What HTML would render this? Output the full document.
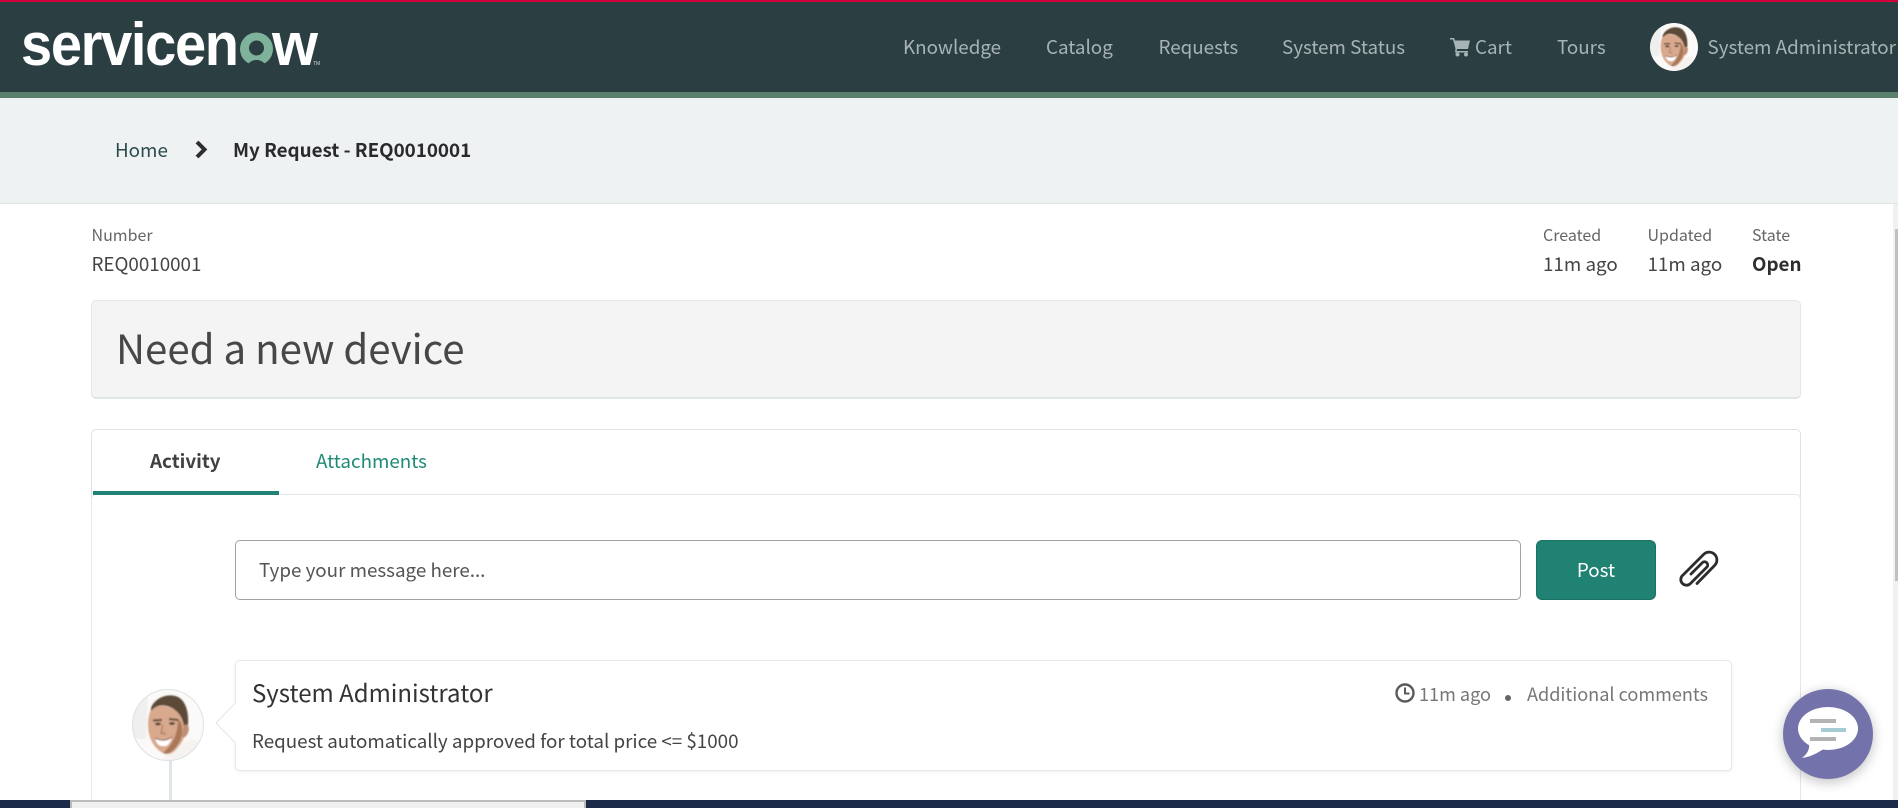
<!DOCTYPE html>
<html lang="en"><head><meta charset="utf-8"><title>My Request</title>
<style>
html,body{margin:0;padding:0;width:1898px;height:808px;overflow:hidden;background:#fff}
body{position:relative;font-family:"Noto Sans CJK JP","Liberation Sans",sans-serif;font-size:18.8px}
.b{position:absolute;box-sizing:border-box}
.t{position:absolute;white-space:nowrap;line-height:30px;height:30px}
.nav{color:#a7b4b5;font-size:18.8px;top:32px}
svg{position:absolute;overflow:visible}
</style></head><body>
<!-- header -->
<div class="b" style="left:0;top:0;width:1898px;height:92px;background:#2b3e42"></div>
<div class="b" style="left:0;top:0;width:1898px;height:2px;background:#d3003d"></div>
<div class="b" style="left:0;top:92px;width:1898px;height:6px;background:#5a7f6c"></div>
<div class="b" style="left:0;top:98px;width:1898px;height:106px;background:#eef2f3;border-bottom:1px solid #dfe4e5"></div>
<!-- logo -->
<svg style="left:0;top:0" width="340" height="90">
<text transform="translate(21,65) scale(1,1.07)" font-family="Liberation Sans" font-weight="700" font-size="56" fill="#fff" textLength="218" lengthAdjust="spacing">servicen</text>
<circle cx="256.500" cy="49" r="16.500" fill="#7fb29b"/><circle cx="256.500" cy="48" r="7.500" fill="#2b3e42"/>
<path d="M246 66.500C250 61 253 60 256.500 60S263 61 267 66.500Z" fill="#2b3e42"/>
<text transform="translate(272,65) scale(1,1.07)" font-family="Liberation Sans" font-weight="700" font-size="56" fill="#fff" textLength="46" lengthAdjust="spacingAndGlyphs">w</text>
<text x="313" y="65" font-family="Liberation Sans" font-size="5" fill="#cfd8d8">TM</text>
</svg>
<!-- nav -->
<span class="t nav" style="left:903px">Knowledge</span>
<span class="t nav" style="left:1046px">Catalog</span>
<span class="t nav" style="left:1158.500px">Requests</span>
<span class="t nav" style="left:1282px">System Status</span>
<svg style="left:1450px;top:37px" width="21" height="20" viewBox="0 0 21 20"><path d="M0 1H4L5 3.500H20L18 12H7L6.700 14H18V15.500H5L5.500 11.500L3 2.500H0Z" fill="#a7b4b5"/><circle cx="7.500" cy="17.500" r="2" fill="#a7b4b5"/><circle cx="16" cy="17.500" r="2" fill="#a7b4b5"/></svg>
<span class="t nav" style="left:1475px">Cart</span>
<span class="t nav" style="left:1557px">Tours</span>
<svg width="0" height="0" style="left:0;top:0"><defs>
<filter id="bl" x="-20%" y="-20%" width="140%" height="140%"><feGaussianBlur stdDeviation="0.900"/></filter>
<clipPath id="cp"><circle cx="36" cy="36" r="35.500"/></clipPath>
<g id="face"><g clip-path="url(#cp)"><rect width="72" height="72" fill="#fbfaf9"/>
<g filter="url(#bl)"><path d="M0 8H16L14 50H0Z" fill="#efefed"/>
<path d="M38 60L60 50L72 56V72H30Z" fill="#f5f2ef"/>
<path d="M19 20C28 13 46 18 52 30C56 36 54 50 46 58C42 64 36 67 31 64C23 60 16 50 16 36C16 30 17 25 19 20Z" fill="#d8a98d"/>
<path d="M46 30C52 34 52 50 44 58C40 63 36 66 31 64C38 58 46 48 46 30Z" fill="#a97858"/>
<path d="M19 19C22 10 35 3 46 8C54 12 57 24 56 36L52 40C52 30 47 22 38 18C30 15 24 16 19 22Z" fill="#5d4a38"/>
<path d="M52 36C56 34 58 38 56 44C54 48 51 50 50 47Z" fill="#bd8e72"/>
<path d="M21 31.500L30 31M37 30L46 31" stroke="#5f4836" stroke-width="2" fill="none"/>
<ellipse cx="26" cy="35" rx="3" ry="1.400" fill="#4f3d2f"/><ellipse cx="40" cy="34.500" rx="3" ry="1.400" fill="#4f3d2f"/>
<path d="M31 36L29 44L34 45" stroke="#a97858" stroke-width="1.200" fill="none"/>
<path d="M23 49C28 52 35 52 40 48C38 56 34 58 30 57C26 57 24 53 23 49Z" fill="#fff"/>
<path d="M23 49C28 52 35 52 40 48" stroke="#7d4a38" stroke-width="1" fill="none"/></g></g></g>
</defs></svg>
<svg style="left:1650px;top:23px" width="48" height="48" viewBox="0 0 72 72"><circle cx="36" cy="36" r="36" fill="#fff"/><use href="#face"/></svg>
<span class="t nav" style="left:1707.500px">System Administrator</span>
<!-- breadcrumb -->
<span class="t" style="left:115px;top:135px;color:#2c4b4d">Home</span>
<svg style="left:194px;top:140px" width="14" height="19"><path d="M3 2L10.500 9.500L3 17" fill="none" stroke="#2d2d33" stroke-width="4"/></svg>
<span class="t" style="left:233px;top:135px;color:#2a2a2e;font-weight:700">My Request - REQ0010001</span>
<!-- meta -->
<span class="t" style="left:91.500px;top:219px;font-size:16px;color:#666">Number</span>
<span class="t" style="left:91.500px;top:249px;color:#444">REQ0010001</span>
<span class="t" style="left:1543px;top:219px;font-size:16px;color:#666">Created</span>
<span class="t" style="left:1543px;top:249px;color:#444">11m ago</span>
<span class="t" style="left:1647.500px;top:219px;font-size:16px;color:#666">Updated</span>
<span class="t" style="left:1647.500px;top:249px;color:#444">11m ago</span>
<span class="t" style="left:1752px;top:219px;font-size:16px;color:#666">State</span>
<span class="t" style="left:1752px;top:249px;color:#2e2e2e;font-weight:700">Open</span>
<!-- title -->
<div class="b" style="left:91px;top:300px;width:1710px;height:99px;background:#f4f4f4;border:1px solid #e2e8ea;border-bottom:2px solid #e0e5e8;border-radius:5px"></div>
<span class="t" style="left:116px;top:326px;font-size:40.200px;line-height:42px;height:42px;color:#474747">Need a new device</span>
<!-- tabs + panel -->
<div class="b" style="left:91px;top:429px;width:1710px;height:70px;border:1px solid #dde3e5;border-bottom:0;border-radius:5px 5px 0 0"></div>
<div class="b" style="left:91px;top:494px;width:1710px;height:320px;background:#fff;border:1px solid #e1e7ea;border-radius:5px"></div>
<div class="b" style="left:93px;top:491px;width:186px;height:4px;background:#1f8272"></div>
<span class="t" style="left:150px;top:446px;color:#404040;font-weight:700">Activity</span>
<span class="t" style="left:316px;top:446px;color:#1f8a76">Attachments</span>
<!-- input -->
<div class="b" style="left:235px;top:540px;width:1286px;height:60px;border:1px solid #a1a1a1;border-radius:5px;background:#fff"></div>
<span class="t" style="left:259px;top:555px;color:#555">Type your message here...</span>
<div class="b" style="left:1536px;top:540px;width:120px;height:60px;background:#1f8272;border:1px solid #1a7263;border-radius:6px"></div>
<span class="t" style="left:1576px;top:555px;color:#fff;width:40px;text-align:center">Post</span>
<svg style="left:1679px;top:552px" width="38" height="34" viewBox="0 0 38 34"><path d="M18 31.500L36 13A7.800 7.800 0 0 0 25 2L3 24A5.700 5.700 0 0 0 11 32L28 15A3.200 3.200 0 0 0 23.500 10.500L12 22" fill="none" stroke="#2c2c2c" stroke-width="2.800" stroke-linecap="round"/></svg>
<!-- timeline avatar -->
<div class="b" style="left:169px;top:760px;width:3px;height:40px;background:#dfe6e9"></div>
<svg style="left:132px;top:689px" width="72" height="72" viewBox="0 0 72 72"><use href="#face"/><circle cx="36" cy="36" r="35.500" fill="none" stroke="#dbe3e5" stroke-width="1"/></svg>
<!-- card -->
<div class="b" style="left:235px;top:660px;width:1497px;height:111px;background:#fff;border:1px solid #e3e9ec;border-radius:5px;box-shadow:0 1px 3px rgba(0,0,0,.07)"></div>
<svg style="left:214px;top:700px" width="24" height="46"><path d="M21.500 3L2 23L21.500 43" fill="#fff" stroke="#e1e7ea" stroke-width="1"/><rect x="21.500" y="3" width="2" height="40" fill="#fff"/></svg>
<span class="t" style="left:252px;top:677px;font-size:24px;color:#333">System Administrator</span>
<span class="t" style="left:252px;top:726px;font-size:18.800px;color:#444">Request automatically approved for total price &lt;= $1000</span>
<svg style="left:1395px;top:683px" width="20" height="20"><circle cx="10" cy="10" r="8.500" fill="none" stroke="#5a5a5a" stroke-width="2.400"/><path d="M10 4.500V10.500H14.500" fill="none" stroke="#5a5a5a" stroke-width="2"/></svg>
<span class="t" style="left:1419px;top:679px;font-size:18.100px;color:#777">11m ago</span>
<div class="b" style="left:1505px;top:695px;width:6px;height:6px;border-radius:50%;background:#666"></div>
<span class="t" style="left:1527px;top:679px;font-size:18.100px;color:#777">Additional comments</span>
<!-- scrollbar -->
<div class="b" style="left:1893px;top:204px;width:5px;height:596px;background:#f1f1f1"></div>
<div class="b" style="left:1895px;top:229px;width:3px;height:352px;background:#c1c1c1"></div>
<!-- chat -->
<div class="b" style="left:1783px;top:689px;width:90px;height:90px;border-radius:50%;background:#7472ab;box-shadow:0 3px 12px rgba(0,0,0,.25)"></div>
<svg style="left:1795px;top:704px" width="70" height="60"><ellipse cx="33" cy="24.500" rx="30" ry="21.500" fill="#fff"/><path d="M14 38C15 46 12 50 7 54C15 53 23 49 30 44Z" fill="#fff"/><rect x="15" y="15" width="26" height="4" fill="#b3b3b3"/><rect x="26" y="24" width="25" height="4" fill="#a5cbd3"/><rect x="15" y="33" width="26" height="4" fill="#b3b3b3"/></svg>
<!-- bottom -->
<div class="b" style="left:0;top:800px;width:1898px;height:8px;background:#1a2a47"></div>
<div class="b" style="left:70px;top:800px;width:516px;height:8px;background:#f0f0f0;border:2px solid #bbb;border-bottom:0"></div>
</body></html>
